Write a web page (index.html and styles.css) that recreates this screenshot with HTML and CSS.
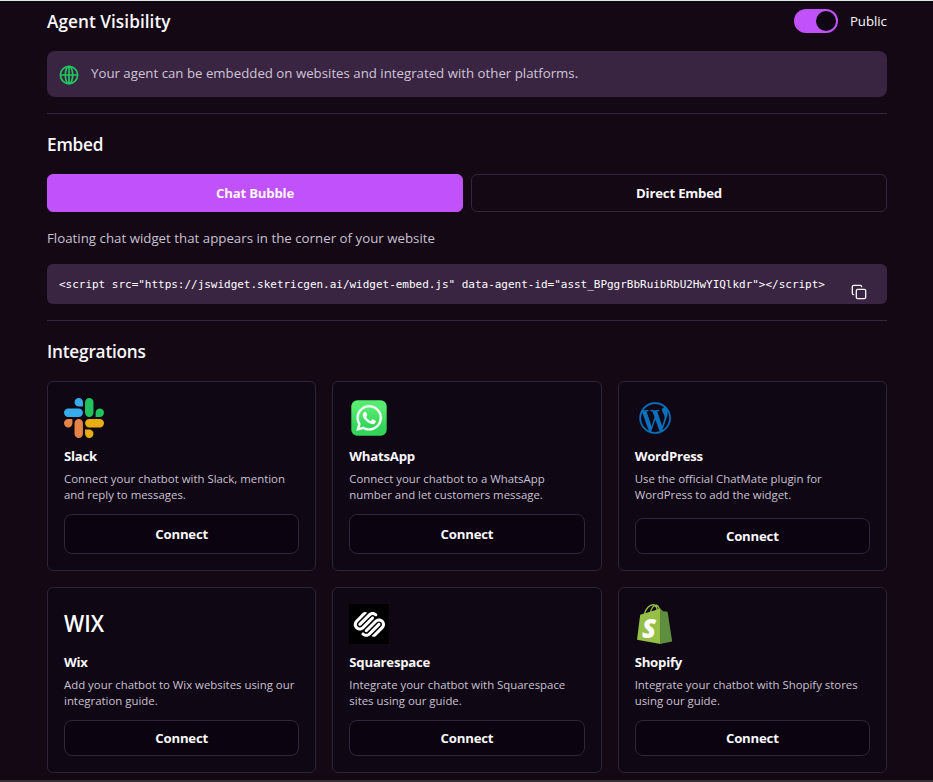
FILE: index.html
```html
<!DOCTYPE html>
<html lang="en">
<head>
<meta charset="utf-8">
<title>Agent settings</title>
<link rel="stylesheet" href="styles.css">
</head>
<body>
<main class="page">
  <header class="head">
    <h2 class="heading visibility-heading">Agent Visibility</h2>
    <div class="visibility">
      <span class="switch" role="switch" aria-checked="true"><span class="knob"></span></span>
      <span class="switch-label">Public</span>
    </div>
  </header>
  <div class="notice">
    <svg class="globe" viewBox="0 0 20 20"><circle cx="10" cy="10" r="8.6"/><ellipse cx="10" cy="10" rx="3.7" ry="8.6"/><path d="M1.4 10h17.2M10 1.4v17.2"/></svg>
    <span class="notice-text">Your agent can be embedded on websites and integrated with other platforms.</span>
  </div>
  <hr class="rule">
  <h2 class="heading embed-heading">Embed</h2>
  <div class="tabs">
    <button class="tab tab-active">Chat Bubble</button>
    <button class="tab">Direct Embed</button>
  </div>
  <p class="hint">Floating chat widget that appears in the corner of your website</p>
  <div class="snippet">
    <code class="code">&lt;script src="https://jswidget.sketricgen.ai/widget-embed.js" data-agent-id="asst_BPggrBbRuibRbU2HwYIQlkdr"&gt;&lt;/script&gt;</code>
    <svg class="copy" viewBox="0 0 24 24"><rect x="8" y="8" width="14" height="14" rx="2"/><path d="M4 16c-1.1 0-2-.9-2-2V4c0-1.100.9-2 2-2h10c1.100 0 2 .9 2 2"/></svg>
  </div>
  <hr class="rule">
  <h2 class="heading integrations-heading">Integrations</h2>
  <div class="grid">
    <article class="card">
      <svg class="logo" viewBox="0 0 24 24">
        <path fill="#e58347" d="M5.042 15.165a2.528 2.528 0 0 1-2.520 2.523A2.528 2.528 0 0 1 0 15.165a2.527 2.527 0 0 1 2.522-2.520h2.520v2.520zM6.313 15.165a2.527 2.527 0 0 1 2.521-2.520 2.527 2.527 0 0 1 2.521 2.520v6.313A2.528 2.528 0 0 1 8.834 24a2.528 2.528 0 0 1-2.521-2.522v-6.313z"/>
        <path fill="#36adea" d="M8.834 5.042a2.528 2.528 0 0 1-2.521-2.520A2.528 2.528 0 0 1 8.834 0a2.528 2.528 0 0 1 2.521 2.522v2.520H8.834zM8.834 6.313a2.528 2.528 0 0 1 2.521 2.521 2.528 2.528 0 0 1-2.521 2.521H2.522A2.528 2.528 0 0 1 0 8.834a2.528 2.528 0 0 1 2.522-2.521h6.312z"/>
        <path fill="#22c35e" d="M18.956 8.834a2.528 2.528 0 0 1 2.522-2.521A2.528 2.528 0 0 1 24 8.834a2.528 2.528 0 0 1-2.522 2.521h-2.522V8.834zM17.688 8.834a2.528 2.528 0 0 1-2.523 2.521 2.527 2.527 0 0 1-2.520-2.521V2.522A2.527 2.527 0 0 1 15.165 0a2.528 2.528 0 0 1 2.523 2.522v6.312z"/>
        <path fill="#e8ad13" d="M15.165 18.956a2.528 2.528 0 0 1 2.523 2.522A2.528 2.528 0 0 1 15.165 24a2.527 2.527 0 0 1-2.520-2.522v-2.522h2.520zM15.165 17.688a2.527 2.527 0 0 1-2.520-2.523 2.526 2.526 0 0 1 2.520-2.520h6.313A2.527 2.527 0 0 1 24 15.165a2.528 2.528 0 0 1-2.522 2.523h-6.313z"/>
      </svg>
      <h3 class="name">Slack</h3>
      <p class="desc">Connect your chatbot with Slack, mention<br>and reply to messages.</p>
      <button class="connect">Connect</button>
    </article>
    <article class="card">
      <svg class="logo" viewBox="0 0 40 40">
        <defs><linearGradient id="wa" x1="0" y1="0" x2="0" y2="1"><stop offset="0.2" stop-color="#56ec72"/><stop offset="0.75" stop-color="#32d558"/></linearGradient></defs>
        <rect x="2.300" y="2.300" width="35.400" height="35.400" rx="6" fill="url(#wa)"/>
        <path transform="translate(7.400 7.200) scale(1.065)" fill="#fff" stroke="#fff" stroke-width=".25" d="M17.472 14.382c-.297-.149-1.758-.867-2.030-.967-.273-.099-.471-.148-.67.15-.197.297-.767.966-.94 1.164-.173.199-.347.223-.644.075-.297-.15-1.255-.463-2.390-1.475-.883-.788-1.480-1.761-1.653-2.059-.173-.297-.018-.458.13-.606.134-.133.298-.347.446-.52.149-.174.198-.298.298-.497.099-.198.05-.371-.025-.52-.075-.149-.669-1.612-.916-2.207-.242-.579-.487-.5-.669-.51-.173-.008-.371-.01-.57-.01-.198 0-.52.074-.792.372-.272.297-1.040 1.016-1.040 2.479 0 1.462 1.065 2.875 1.213 3.074.149.198 2.096 3.200 5.077 4.487.709.306 1.262.489 1.694.625.712.227 1.360.195 1.871.118.571-.085 1.758-.719 2.006-1.413.248-.694.248-1.289.173-1.413-.074-.124-.272-.198-.57-.347m-5.421 7.403h-.004a9.870 9.870 0 0 1-5.031-1.378l-.361-.214-3.741.982.998-3.648-.235-.374a9.860 9.860 0 0 1-1.510-5.260c.001-5.450 4.436-9.884 9.888-9.884 2.640 0 5.122 1.030 6.988 2.898a9.825 9.825 0 0 1 2.893 6.994c-.003 5.450-4.437 9.884-9.885 9.884m8.413-18.297A11.815 11.815 0 0 0 12.050 0C5.495 0 .16 5.335.157 11.892c0 2.096.547 4.142 1.588 5.945L.057 24l6.305-1.654a11.882 11.882 0 0 0 5.683 1.448h.005c6.554 0 11.890-5.335 11.893-11.893a11.821 11.821 0 0 0-3.480-8.413z"/>
      </svg>
      <h3 class="name">WhatsApp</h3>
      <p class="desc">Connect your chatbot to a WhatsApp<br>number and let customers message.</p>
      <button class="connect">Connect</button>
    </article>
    <article class="card">
      <svg class="logo" viewBox="0 0 40 40">
        <path transform="translate(4.400 4.300) scale(1.310)" fill="#0b70bd" stroke="#0b70bd" stroke-width=".2" d="M21.469 6.825c.84 1.537 1.318 3.300 1.318 5.175 0 3.979-2.156 7.456-5.363 9.325l3.295-9.527c.615-1.540.82-2.771.82-3.864 0-.405-.026-.78-.07-1.110m-7.981.105c.647-.03 1.232-.105 1.232-.105.582-.075.514-.93-.067-.899 0 0-1.755.135-2.880.135-1.064 0-2.850-.15-2.850-.15-.585-.03-.661.855-.075.885 0 0 .54.061 1.125.09l1.680 4.605-2.370 7.080L5.354 6.900c.649-.03 1.234-.1 1.234-.1.585-.075.516-.93-.065-.896 0 0-1.746.138-2.874.138-.2 0-.438-.008-.69-.015C4.911 3.150 8.235 1.215 12 1.215c2.809 0 5.365 1.072 7.286 2.833-.046-.003-.091-.009-.141-.009-1.060 0-1.812.923-1.812 1.914 0 .89.513 1.643 1.060 2.531.411.72.89 1.643.89 2.977 0 .915-.354 1.994-.821 3.479l-1.075 3.585-3.900-11.610.001.014zM12 22.784c-1.059 0-2.081-.153-3.048-.437l3.237-9.406 3.315 9.087c.024.053.05.101.078.149-1.120.393-2.325.609-3.582.609M1.211 12c0-1.564.336-3.050.935-4.390L7.290 21.709C3.694 19.960 1.212 16.271 1.211 12M12 0C5.385 0 0 5.385 0 12s5.385 12 12 12 12-5.385 12-12S18.615 0 12 0"/>
      </svg>
      <h3 class="name">WordPress</h3>
      <p class="desc">Use the official ChatMate plugin for<br>WordPress to add the widget.</p>
      <button class="connect connect-short">Connect</button>
    </article>
    <article class="card">
      <svg class="logo" viewBox="0 0 40 40"><text class="wix" x="0" y="28" textLength="40" lengthAdjust="spacingAndGlyphs">WIX</text></svg>
      <h3 class="name">Wix</h3>
      <p class="desc">Add your chatbot to Wix websites using our<br>integration guide.</p>
      <button class="connect connect-short">Connect</button>
    </article>
    <article class="card">
      <svg class="logo" viewBox="0 0 40 40">
        <path fill="#000" d="M0 0h40v40H0z"/>
        <path transform="translate(4.800 4.800) scale(1.300)" fill="#fff" d="M22.655 8.719c-1.802-1.801-4.726-1.801-6.564 0l-7.351 7.350c-.45.45-.45 1.200 0 1.650.45.449 1.200.449 1.650 0l7.351-7.351c.899-.899 2.362-.899 3.264 0 .9.9.9 2.364 0 3.264l-7.239 7.239c.9.899 2.362.899 3.263 0l5.589-5.589c1.836-1.838 1.836-4.763.037-6.563zm-2.475 2.437c-.451-.45-1.201-.45-1.650 0l-7.354 7.389c-.9.899-2.361.899-3.262 0-.45-.45-1.200-.45-1.650 0s-.45 1.200 0 1.649c1.801 1.801 4.726 1.801 6.564 0l7.351-7.350c.449-.487.449-1.236.001-1.688zm-2.439-7.350c-1.801-1.801-4.726-1.801-6.564 0l-7.351 7.351c-.45.449-.45 1.199 0 1.649s1.200.45 1.650 0l7.395-7.351c.9-.899 2.371-.899 3.270 0 .451.45 1.201.45 1.650 0 .421-.487.421-1.199-.05-1.649zm-2.475 2.475c-.45-.45-1.200-.45-1.650 0l-7.351 7.350c-.899.9-2.363.9-3.265 0-.9-.9-.9-2.364 0-3.264l7.239-7.239c-.9-.9-2.362-.9-3.263 0L1.350 8.719c-1.800 1.800-1.800 4.762 0 6.563 1.801 1.801 4.725 1.801 6.563 0l7.350-7.351c.451-.488.451-1.238.003-1.650z"/>
      </svg>
      <h3 class="name">Squarespace</h3>
      <p class="desc">Integrate your chatbot with Squarespace<br>sites using our guide.</p>
      <button class="connect connect-short">Connect</button>
    </article>
    <article class="card">
      <svg class="logo" viewBox="0 0 40 40">
        <path fill="#95bf47" d="M5.200 10.700 25.600 4.500V40L2 35.700z"/>
        <path fill="#5e8e3e" d="M25.300 4.700 28.300 7.200 32.600 7.700 37.200 37.400 25.300 40z"/>
        <path fill="none" stroke="#95bf47" stroke-width="1.400" d="M9.500 10C10.800 4.500 14.800.7 18 .8c2.700.2 4 3 4.300 6M15.500 8.500C16 4 19 1 21.300 1.300c1.700.4 2.700 2.400 3 4.700"/>
        <text class="bag-letter" x="7" y="33.800" textLength="14" lengthAdjust="spacingAndGlyphs">S</text>
      </svg>
      <h3 class="name">Shopify</h3>
      <p class="desc">Integrate your chatbot with Shopify stores<br>using our guide.</p>
      <button class="connect connect-short">Connect</button>
    </article>
  </div>
</main>
</body>
</html>
```
FILE: styles.css
```css
* { box-sizing: border-box; margin: 0; padding: 0; }

body {
  height: 782px;
  overflow: hidden;
  background: #130814;
  color: #fbf8fc;
  font-family: "Open Sans", "Noto Sans", sans-serif;
  font-size: 13.250px;
  border-top: 1px solid #dfe5e6;
  border-bottom: 2px solid #353235;
}

.page { padding: 0 46px 0 47px; box-shadow: inset 0 2px #0b090f; }

.head { display: flex; justify-content: space-between; align-items: center; height: 40px; }
.heading { height: 28px; font-size: 17.200px; line-height: 29px; font-weight: 650; letter-spacing: -0.2px; }
.visibility-heading { letter-spacing: 0.05px; }
.visibility { display: flex; align-items: center; gap: 12px; }
.switch { display: flex; justify-content: flex-end; width: 44px; height: 24px; padding: 2px; border-radius: 12px; background: #c152fb; }
.knob { width: 20px; height: 20px; border-radius: 50%; background: #0e0612; }
.switch-label { width: 37px; line-height: 20px; letter-spacing: -0.1px; }

.notice { display: flex; align-items: center; gap: 12px; height: 46px; margin-top: 10px; padding: 0 12px; border-radius: 8px; background: #392442; }
.globe { width: 20px; height: 20px; margin-top: 2px; fill: none; stroke: #22c55e; stroke-width: 1.7; }
.notice-text { color: #cfc6d8; line-height: 20px; margin-top: -2px; white-space: nowrap; }

.rule { height: 1px; border: 0; margin: 16px 0; background: #35263d; }
.embed-heading { margin-bottom: 16px; }

.tabs { display: grid; grid-template-columns: 1fr 1fr; gap: 8px; }
.tab { height: 38px; border: 1px solid #35263f; border-radius: 6px; background: transparent; color: #fbf8fc; font: 700 13.200px/20px "Open Sans", sans-serif; letter-spacing: -0.2px; }
.tab-active { border-color: #c152fb; background: #c152fb; }

.hint { height: 20px; margin-top: 16px; line-height: 21px; color: #cac1d2; letter-spacing: 0.02px; }
.snippet { display: flex; height: 40px; margin-top: 16px; padding: 0 20px 0 12px; justify-content: space-between; border-radius: 6px; background: #392442; }
.code { font: 11px/41px "DejaVu Sans Mono", monospace; color: #fff; white-space: nowrap; letter-spacing: -0.02px; }
.copy { width: 16px; height: 16px; margin-top: 20px; fill: none; stroke: #f8f5fa; stroke-width: 2; stroke-linecap: round; stroke-linejoin: round; }

.integrations-heading { margin-bottom: 16px; }
.grid { display: grid; grid-template-columns: repeat(3, minmax(0, 1fr)); grid-template-rows: 190px 186px; gap: 16px; }
.card { display: flex; flex-direction: column; padding: 16px; border: 1px solid #2e2437; border-radius: 6px; background: #0f0713; }
.logo { display: block; width: 40px; height: 40px; flex: none; overflow: visible; }
.name { height: 20px; margin-top: 8px; font-size: 13.200px; line-height: 20px; font-weight: 700; letter-spacing: -0.24px; }
.desc { margin-top: 5px; font-size: 11.400px; line-height: 16px; color: #cac1d2; white-space: nowrap; }
.connect { height: 40px; margin-top: auto; border: 1px solid #30253a; border-radius: 8px; background: #0b0410; color: #fbf8fc; font: 700 13.200px/20px "Open Sans", sans-serif; letter-spacing: -0.2px; }
.connect-short { height: 36px; }
.wix { font: 600 22.500px "Open Sans", sans-serif; fill: #fff; }
.bag-letter { font: italic 800 27px "Open Sans", sans-serif; fill: #fff; }
```
